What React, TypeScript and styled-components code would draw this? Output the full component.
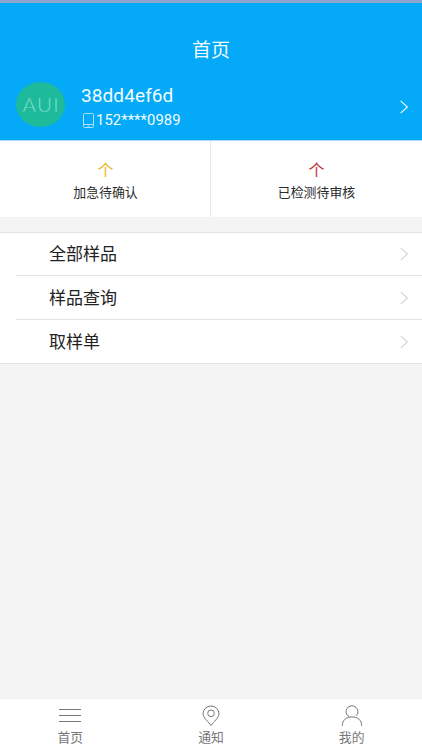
import React from 'react';
import styled, { createGlobalStyle } from 'styled-components';

const GlobalStyle = createGlobalStyle`
  * { box-sizing: border-box; }
  body {
    margin: 0;
    background: #f4f4f4;
    font-family: Roboto, "Noto Sans CJK SC", sans-serif;
  }
`;

const Page = styled.div`
  display: flex;
  flex-direction: column;
  width: 100%;
  height: 750px;
  overflow: hidden;
  background: #f4f4f4;
`;

const Header = styled.header`
  flex: none;
  height: 141px;
  border-top: 3px solid #8ba6cb;
  border-bottom: 1px solid #a5def8;
  background: #04a9f7;
  color: #f2fcff;
`;

const Title = styled.h1`
  margin: 0;
  padding-top: 34px;
  height: 79px;
  font-size: 19px;
  line-height: 28px;
  font-weight: 400;
  text-align: center;
`;

const Profile = styled.div`
  display: flex;
  align-items: flex-start;
  padding: 0 13px 0 16px;
`;

const Avatar = styled.div`
  display: flex;
  align-items: center;
  justify-content: center;
  width: 49px;
  height: 45px;
  border-radius: 50%;
  background: #1dbb9b;
  color: #a4eadb;
  font: 300 20.5px/45px Lato, sans-serif;
  letter-spacing: 1.4px;
  text-indent: 1.4px;
  -webkit-text-stroke: 0.3px #1dbb9b;
`;

const Identity = styled.div`
  flex: 1;
  margin-left: 16px;
  padding-top: 1px;
`;

const Name = styled.div`
  font-size: 19px;
  line-height: 26px;
  letter-spacing: 0.1px;
`;

const Phone = styled.div`
  display: flex;
  align-items: center;
  gap: 2px;
  padding-left: 2px;
  height: 23px;
  font-size: 14.8px;
  line-height: 23px;
  letter-spacing: 0.08px;
`;

const Arrow = styled.svg<{ $top?: number }>`
  flex: none;
  width: 9px;
  height: 14px;
  margin-top: ${({ $top = 0 }) => $top}px;
  fill: none;
  stroke: currentColor;
  stroke-width: 1.1;
`;

const Stats = styled.section`
  flex: none;
  display: grid;
  grid-template-columns: 1fr 1fr;
  height: 76px;
  background: #fff;
`;

const Stat = styled.div`
  padding-top: 19px;
  text-align: center;
  &:first-child { box-shadow: inset -1px 0 #e9e9e9; }
`;

const StatValue = styled.div<{ $color: string }>`
  color: ${({ $color }) => $color};
  font-size: 16px;
  line-height: 22px;
`;

const StatLabel = styled.div`
  color: #2b2b2b;
  font-size: 12.9px;
  line-height: 22px;
`;

const List = styled.ul`
  flex: none;
  margin: 15px 0 0;
  padding: 0 0 0 16px;
  list-style: none;
  background: #fff;
  border-top: 1px solid #e3e3e3;
  border-bottom: 1px solid #e3e3e3;
`;

const ListRow = styled.li`
  display: flex;
  align-items: center;
  justify-content: space-between;
  height: 42px;
  padding: 0 13px 0 33px;
  color: #222;
  font-size: 17px;
  line-height: 24px;
  & + & { height: 44px; border-top: 1px solid #e3e3e3; }
  svg { color: #d2d2d2; }
`;

const TabBar = styled.nav`
  flex: none;
  display: grid;
  grid-template-columns: repeat(3, 1fr);
  height: 51px;
  margin-top: auto;
  background: #fff;
`;

const Tab = styled.div`
  display: flex;
  flex-direction: column;
  align-items: center;
  padding-top: 6px;
  color: #777;
  font-size: 12.8px;
  line-height: 22px;
`;

const TabIcon = styled.svg`
  width: 22px;
  height: 22px;
  fill: none;
  stroke: #777;
  stroke-width: 1;
`;

const Chevron = ({ top }: { top?: number }) => (
  <Arrow $top={top} viewBox="0 0 9 14">
    <path d="M0.6 0.8 7.4 7 0.6 13.2" />
  </Arrow>
);

const PhoneIcon = () => (
  <svg width="11" height="15" viewBox="0 0 11 15" fill="none" stroke="#a9e3fc">
    <rect x="0.5" y="0.5" width="10" height="14" rx="1" />
    <path d="M.5 11.5h10M4.5 13h2" />
  </svg>
);

const rows = ['全部样品', '样品查询', '取样单'];

export default function App() {
  return (
    <Page>
      <GlobalStyle />
      <Header>
        <Title>首页</Title>
        <Profile>
          <Avatar>AUI</Avatar>
          <Identity>
            <Name>38dd4ef6d</Name>
            <Phone><PhoneIcon />152****0989</Phone>
          </Identity>
          <Chevron top={18} />
        </Profile>
      </Header>
      <Stats>
        <Stat>
          <StatValue $color="#e5bd25">个</StatValue>
          <StatLabel>加急待确认</StatLabel>
        </Stat>
        <Stat>
          <StatValue $color="#c3333b">个</StatValue>
          <StatLabel>已检测待审核</StatLabel>
        </Stat>
      </Stats>
      <List>
        {rows.map((label) => (
          <ListRow key={label}>{label}<Chevron /></ListRow>
        ))}
      </List>
      <TabBar>
        <Tab>
          <TabIcon viewBox="0 0 22 22"><path d="M0 4.5h22M0 10.5h22M0 16.5h22" /></TabIcon>
          首页
        </Tab>
        <Tab>
          <TabIcon viewBox="0 0 22 22">
            <path d="M11 20.5C8.5 17 3 12.5 3 8.8a8 7.8 0 0 1 16 0C19 12.5 13.5 17 11 20.5Z" />
            <circle cx="11" cy="8.3" r="3.3" />
          </TabIcon>
          通知
        </Tab>
        <Tab>
          <TabIcon viewBox="0 0 22 22">
            <path d="M8.2 11.6A6 5.7 0 1 1 15 10.8M1.3 20.8C1.3 15 5.5 11.9 11 11.9s9.7 3.1 9.7 8.9" />
          </TabIcon>
          我的
        </Tab>
      </TabBar>
    </Page>
  );
}
